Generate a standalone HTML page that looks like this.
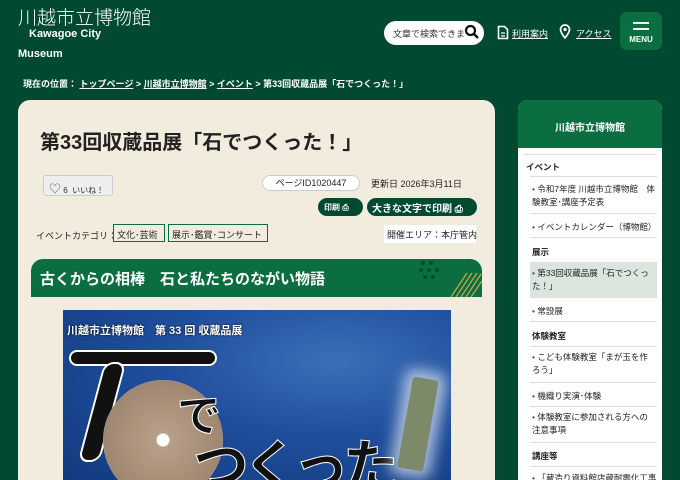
<!DOCTYPE html>
<html><head><meta charset="utf-8"><style>
*{margin:0;padding:0;box-sizing:border-box}
html,body{width:680px;height:480px;overflow:hidden}
body{background:#014a31;font-family:"Liberation Sans","Noto Sans CJK JP",sans-serif;color:#222;position:relative}
.a{position:absolute;white-space:nowrap}
.w{color:#fff}
u{text-decoration:underline}
.s div.wr{white-space:normal}
</style></head><body>
<div class="a w" style="left:18px;top:3px;font-size:19px;font-weight:300">川越市立博物館</div>
<div class="a w" style="left:29px;top:28px;font-size:11px;font-weight:bold">Kawagoe City</div>
<div class="a w" style="left:18px;top:48px;font-size:11px;font-weight:bold">Museum</div>
<div class="a" style="left:384px;top:21px;width:100px;height:24px;background:#fff;border-radius:12px;font-size:9px;color:#333;padding:6px 0 0 9px;overflow:hidden">文章で検索できま</div>
<svg class="a" style="left:464px;top:24px" width="16" height="16"><circle cx="6.5" cy="6.5" r="4.5" stroke="#111" stroke-width="2.2" fill="#fff"/><path d="M10 10L14 14" stroke="#111" stroke-width="2.5"/></svg>
<svg class="a" style="left:497px;top:25px" width="12" height="15"><path d="M1.5 1.5h6l3 3v9h-9z" fill="none" stroke="#fff" stroke-width="1.6"/><path d="M4 8h4M4 11h4" stroke="#fff" stroke-width="1.3"/></svg>
<div class="a w" style="left:512px;top:27px;font-size:9px"><u>利用案内</u></div>
<svg class="a" style="left:559px;top:24px" width="12" height="16"><path d="M6 14C2 9 1.5 7 1.5 5.5a4.5 4.5 0 0 1 9 0C10.5 7 10 9 6 14z" fill="none" stroke="#fff" stroke-width="1.7"/><circle cx="6" cy="5.5" r="1.6" fill="#fff"/></svg>
<div class="a w" style="left:576px;top:27px;font-size:9px"><u>アクセス</u></div>
<div class="a" style="left:620px;top:12px;width:42px;height:38px;background:#0b6e40;border-radius:7px"></div>
<div class="a" style="left:633px;top:22px;width:16px;height:2px;background:#fff"></div>
<div class="a" style="left:633px;top:28px;width:16px;height:2px;background:#fff"></div>
<div class="a w" style="left:620px;top:35px;width:42px;text-align:center;font-size:8px;font-weight:bold">MENU</div>
<div class="a w" style="left:23px;top:77px;font-size:9px;font-weight:bold">現在の位置： <u>トップページ</u> &gt; <u>川越市立博物館</u> &gt; <u>イベント</u> &gt; 第33回収蔵品展「石でつくった！」</div>

<div class="a" style="left:18px;top:100px;width:477px;height:400px;background:#f2ecde;border-radius:12px"></div>
<div class="a" style="left:40px;top:126px;font-size:20px;font-weight:bold;color:#222">第33回収蔵品展「石でつくった！」</div>
<div class="a" style="left:43px;top:175px;width:70px;height:21px;background:#eee;border:1px solid #ccc;border-radius:3px;font-size:8px;padding:4px 0 0 5px;color:#333"><span style="font-size:12px;color:#666">♡</span> 6 &nbsp;いいね！</div>
<div class="a" style="left:262px;top:175px;width:98px;height:16px;background:#fff;border:1px solid #ccc;border-radius:8px;font-size:9px;text-align:center;line-height:14px">ページID1020447</div>
<div class="a" style="left:371px;top:177px;font-size:9px">更新日 2026年3月11日</div>
<div class="a w" style="left:318px;top:198px;width:45px;height:18px;background:#014a31;border-radius:9px;font-size:8px;font-weight:bold;padding:4px 0 0 6px">印刷 ⎙</div>
<div class="a w" style="left:367px;top:198px;width:110px;height:18px;background:#014a31;border-radius:9px;font-size:10px;font-weight:bold;padding:2px 0 0 5px">大きな文字で印刷 ⎙</div>
<div class="a" style="left:36px;top:229px;font-size:9px">イベントカテゴリ：</div>
<div class="a" style="left:113px;top:224px;width:52px;height:18px;border:1.5px solid #0b6e40;font-size:9px;padding:3px 0 0 3px">文化･芸術</div>
<div class="a" style="left:168px;top:224px;width:100px;height:18px;border:1.5px solid #0b6e40;font-size:9px;padding:3px 0 0 3px">展示･鑑賞･コンサート</div>
<div class="a" style="left:384px;top:225px;width:92px;height:18px;background:#fff;font-size:9px;padding:3px 0 0 3px">開催エリア：本庁管内</div>
<div class="a" style="left:31px;top:259px;width:451px;height:38px;background:#0b6e40;border-radius:12px 12px 0 0"></div>
<div class="a w" style="left:40px;top:268px;font-size:15px;font-weight:bold">古くからの相棒　石と私たちのながい物語</div>
<svg class="a" style="left:415px;top:259px" width="67" height="38"><g fill="#014a31"><circle cx="8" cy="4" r="2"/><circle cx="16" cy="4" r="2"/><circle cx="6" cy="11" r="2"/><circle cx="14" cy="11" r="2"/><circle cx="22" cy="11" r="2"/><circle cx="10" cy="18" r="2"/><circle cx="18" cy="18" r="2"/></g><g stroke="#c9a94a" stroke-width="1.2"><path d="M36 38L52 14M41 38L57 14M46 38L62 14M51 38L66 15M56 38L67 22"/></g></svg>
<div class="a" style="left:63px;top:310px;width:388px;height:170px;background:radial-gradient(ellipse at 70% 30%,#3d6fb8 0%,#1f4e9c 45%,#123a7e 100%);overflow:hidden">
<div class="a" style="left:4px;top:12px;color:#fff;font-size:11px;font-weight:bold;text-shadow:0 0 2px #000">川越市立博物館　第 33 回 収蔵品展</div>
<div class="a" style="left:6px;top:40px;width:148px;height:16px;background:#111;border:2px solid #fff;border-radius:8px"></div>
<div class="a" style="left:28px;top:52px;width:22px;height:100px;background:#111;border:2px solid #fff;border-radius:10px;transform:skewX(-15deg)"></div>
<div class="a" style="left:40px;top:70px;width:120px;height:120px;border-radius:50%;background:radial-gradient(circle,#fff 0 6px,#b7a089 7px,#9f8670 70%,#fff 72%,#cfe0ff 78%,transparent 85%)"></div>
<div class="a" style="left:114px;top:70px;font-size:44px;color:#111;font-weight:bold;-webkit-text-stroke:1px #fff">で</div>
<div class="a" style="left:130px;top:112px;font-size:56px;color:#111;font-weight:bold;-webkit-text-stroke:1px #fff;letter-spacing:-6px">つくった</div>
<div class="a" style="left:342px;top:68px;width:26px;height:92px;background:#7c8a6a;border-radius:3px;transform:rotate(10deg);box-shadow:0 0 14px 8px rgba(255,255,255,.6)"></div>
</div>

<div class="a" style="left:518px;top:100px;width:144px;height:380px;background:#fff;border-radius:10px 10px 0 0"></div>
<div class="a w" style="left:518px;top:100px;width:144px;height:48px;background:#0b6e40;border-radius:10px 10px 0 0;text-align:center;padding-top:19px;font-size:10px;font-weight:bold">川越市立博物館</div>
<div class="a" style="left:524px;top:154px;width:133px;height:1px;background:#ddd"></div>
<div class="s" style="font-size:8.5px;color:#222">
<div class="a" style="left:526px;top:161px;font-weight:bold">イベント</div>
<div class="a" style="left:530px;top:176px;width:127px;height:1px;background:#ddd"></div>
<div class="a wr" style="left:532px;top:183px;width:124px;line-height:13px"><span style="color:#0b6e40">•</span> 令和7年度 川越市立博物館　体験教室･講座予定表</div>
<div class="a" style="left:530px;top:213px;width:127px;height:1px;background:#ddd"></div>
<div class="a" style="left:532px;top:221px"><span style="color:#0b6e40">•</span> イベントカレンダー（博物館）</div>
<div class="a" style="left:530px;top:237px;width:127px;height:1px;background:#ddd"></div>
<div class="a" style="left:532px;top:246px;font-weight:bold">展示</div>
<div class="a" style="left:530px;top:262px;width:127px;height:36px;background:#dbe4dd"></div>
<div class="a wr" style="left:532px;top:267px;width:120px;line-height:13px"><span style="color:#0b6e40">•</span> 第33回収蔵品展「石でつくった！」</div>
<div class="a" style="left:532px;top:305px"><span style="color:#0b6e40">•</span> 常設展</div>
<div class="a" style="left:530px;top:321px;width:127px;height:1px;background:#ddd"></div>
<div class="a" style="left:532px;top:330px;font-weight:bold">体験教室</div>
<div class="a" style="left:530px;top:346px;width:127px;height:1px;background:#ddd"></div>
<div class="a wr" style="left:532px;top:351px;width:124px;line-height:13px"><span style="color:#0b6e40">•</span> こども体験教室「まが玉を作ろう」</div>
<div class="a" style="left:530px;top:382px;width:127px;height:1px;background:#ddd"></div>
<div class="a" style="left:532px;top:390px"><span style="color:#0b6e40">•</span> 機織り実演･体験</div>
<div class="a" style="left:530px;top:406px;width:127px;height:1px;background:#ddd"></div>
<div class="a wr" style="left:532px;top:411px;width:124px;line-height:13px"><span style="color:#0b6e40">•</span> 体験教室に参加される方への注意事項</div>
<div class="a" style="left:530px;top:442px;width:127px;height:1px;background:#ddd"></div>
<div class="a" style="left:532px;top:450px;font-weight:bold">講座等</div>
<div class="a" style="left:530px;top:466px;width:127px;height:1px;background:#ddd"></div>
<div class="a" style="left:532px;top:472px;width:124px;overflow:hidden"><span style="color:#0b6e40">•</span> 「蔵造り資料館店蔵耐震化工事</div>
</div>
</body></html>
